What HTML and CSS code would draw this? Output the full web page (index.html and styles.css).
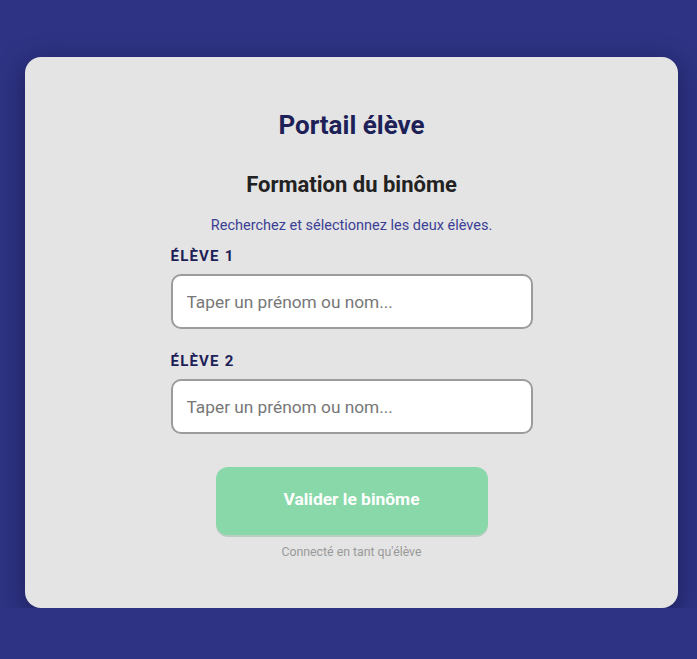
FILE: index.html
```html
<!DOCTYPE html>
<html lang="fr">
<head>
    <meta charset="UTF-8">
    <meta name="viewport" content="width=device-width, initial-scale=1.0">
    <title>Portail élève</title>
    <link rel="stylesheet" href="styles.css">
</head>
<body>
    <div class="card">
        <h1 class="title">Portail élève</h1>
        <h2 class="subtitle">Formation du binôme</h2>
        <p class="hint">Recherchez et sélectionnez les deux élèves.</p>
        <div class="form">
            <div class="field">
                <label class="field-label" for="eleve1">ÉLÈVE 1</label>
                <input type="text" id="eleve1" class="field-input" placeholder="Taper un prénom ou nom...">
            </div>
            <div class="field">
                <label class="field-label" for="eleve2">ÉLÈVE 2</label>
                <input type="text" id="eleve2" class="field-input" placeholder="Taper un prénom ou nom...">
            </div>
        </div>
        <button class="submit" disabled>Valider le binôme</button>
        <p class="footer">Connecté en tant qu'élève</p>
    </div>
</body>
</html>
```

FILE: styles.css
```css
body {
    margin: 0;
    background-color: #2e3383;
    font-family: Roboto, "Noto Sans", sans-serif;
}
.card {
    width: 653px;
    box-sizing: border-box;
    margin: 57px 19px 0 25px;
    padding: 50px 0 48px;
    background-color: #e4e4e4;
    border-radius: 16px;
    box-shadow: 0 6px 24px rgba(10, 12, 50, 0.5);
    display: flex;
    flex-direction: column;
    align-items: center;
}
.title {
    margin: 0;
    font-size: 26px;
    line-height: 36px;
    font-weight: 700;
    color: #1e2157;
}
.subtitle {
    margin: 28px 0 0;
    font-size: 22px;
    line-height: 28px;
    font-weight: 700;
    color: #222;
}
.hint {
    margin: 17px 0 0;
    font-size: 14.5px;
    line-height: 20px;
    color: #3b3f95;
}
.form {
    width: 362px;
    margin-top: 10px;
    display: flex;
    flex-direction: column;
    gap: 22px;
}
.field {
    display: flex;
    flex-direction: column;
    gap: 8px;
}
.field-label {
    font-size: 15px;
    line-height: 20px;
    font-weight: 700;
    letter-spacing: 1.2px;
    color: #1e2157;
}
.field-input {
    height: 55px;
    box-sizing: border-box;
    padding: 0 14px;
    border: 2px solid #9c9c9c;
    border-radius: 10px;
    background: #fff;
    font-family: inherit;
    font-size: 17.3px;
    color: #333;
}
.field-input::placeholder {
    color: #777;
}
.submit {
    width: 272px;
    height: 68px;
    margin-top: 33px;
    padding: 0 0 5px;
    border: none;
    border-radius: 12px;
    background-color: #88d8a9;
    box-shadow: 0 2px 0 rgba(60, 140, 90, 0.25);
    font-family: inherit;
    font-size: 17.4px;
    font-weight: 700;
    color: #fff;
}
.footer {
    margin: 9px 0 0;
    font-size: 12.3px;
    line-height: 16px;
    color: #999;
}
```
